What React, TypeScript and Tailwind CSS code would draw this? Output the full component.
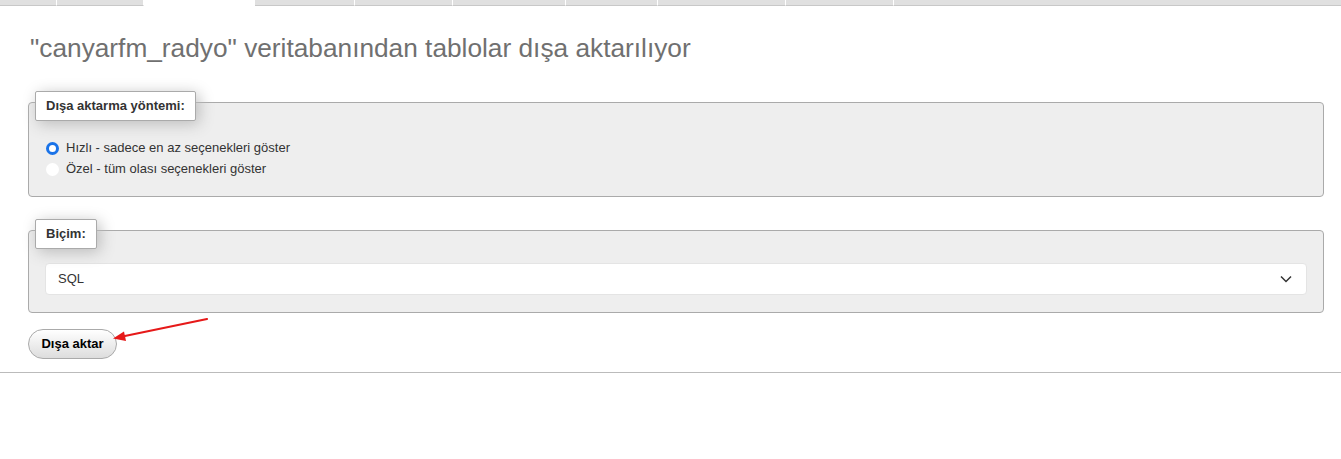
import React, { useState } from 'react';

const tabs = [57, 87, 111, 100, 98, 113, 92, 128, 108];

const Legend = ({ children }: { children: React.ReactNode }) => (
  <div className="absolute left-[6px] top-[-12px] bg-white border border-[#aaa] rounded-[2px] shadow-[3px_3px_15px_#bbb] px-[10px] py-[6px] text-[13px] font-bold text-[#333] leading-[16px]">
    {children}
  </div>
);

const App = () => {
  const [method, setMethod] = useState('quick');

  return (
    <div className="w-[1341px] h-[459px] bg-white font-['Liberation_Sans',Arial,sans-serif] text-[13px] text-[#444]">
      {/* top tab strip */}
      <div className="flex h-[6px]">
        {tabs.map((w, i) => (
          <div
            key={i}
            style={{ width: w }}
            className={
              i === 2
                ? 'bg-white'
                : 'bg-[#e0e0e0] border-r border-white border-b border-b-[#c8c8c8]'
            }
          />
        ))}
        <div className="flex-1 bg-[#e0e0e0] border-b border-b-[#c8c8c8]" />
      </div>

      <div className="pl-[28px] pr-[17px]">
        <h2 className="text-[26.25px] text-[#707070] pl-[2px] pt-[26px] leading-[32px]">
          "canyarfm_radyo" veritabanından tablolar dışa aktarılıyor
        </h2>

        {/* export method */}
        <div className="relative mt-[38px] h-[95px] bg-[#eee] border border-[#aaa] rounded-[4px]">
          <Legend>Dışa aktarma yöntemi:</Legend>
          <div className="pt-[37px] pl-[17px] flex flex-col gap-[5px]">
            <label className="flex items-center gap-[7px] h-[16px]">
              <span
                onClick={() => setMethod('quick')}
                className={
                  method === 'quick'
                    ? 'w-[13px] h-[13px] rounded-full border-[3.5px] border-[#1a73e8] bg-white'
                    : 'w-[13px] h-[13px] rounded-full bg-white'
                }
              />
              <span className="text-[#333]">Hızlı - sadece en az seçenekleri göster</span>
            </label>
            <label className="flex items-center gap-[7px] h-[16px]">
              <span
                onClick={() => setMethod('custom')}
                className={
                  method === 'custom'
                    ? 'w-[13px] h-[13px] rounded-full border-[3.5px] border-[#1a73e8] bg-white'
                    : 'w-[13px] h-[13px] rounded-full bg-white'
                }
              />
              <span className="text-[#333]">Özel - tüm olası seçenekleri göster</span>
            </label>
          </div>
        </div>

        {/* format */}
        <div className="relative mt-[33px] h-[83px] bg-[#eee] border border-[#aaa] rounded-[4px]">
          <Legend>Biçim:</Legend>
          <div className="pt-[32px] px-[16px]">
            <div className="h-[32px] bg-white border border-[#e4e4e4] rounded-[4px] flex items-center justify-between pl-[12px] pr-[14px] text-[#333]">
              <span>SQL</span>
              <svg width="12" height="8" viewBox="0 0 12 8" fill="none">
                <path d="M1 1.5 L6 6.5 L11 1.5" stroke="#333" strokeWidth="1.5" />
              </svg>
            </div>
          </div>
        </div>

        <div className="relative mt-[16px] h-[30px]">
          <button className="h-[30px] w-[89px] rounded-full border border-[#aaa] bg-gradient-to-b from-white to-[#ddd] text-[13px] font-bold text-black">
            Dışa aktar
          </button>
          {/* red annotation arrow */}
          <svg className="absolute left-[80px] top-[-12px]" width="110" height="30" viewBox="0 0 110 30">
            <line x1="99" y1="2" x2="12" y2="20" stroke="#e61919" strokeWidth="2.2" strokeLinecap="round" />
            <path d="M5 21.5 L16 14.5 L18 24 Z" fill="#e61919" />
          </svg>
        </div>
      </div>

      <div className="mt-[13px] border-t border-[#bbb]" />
    </div>
  );
};

export default App;
